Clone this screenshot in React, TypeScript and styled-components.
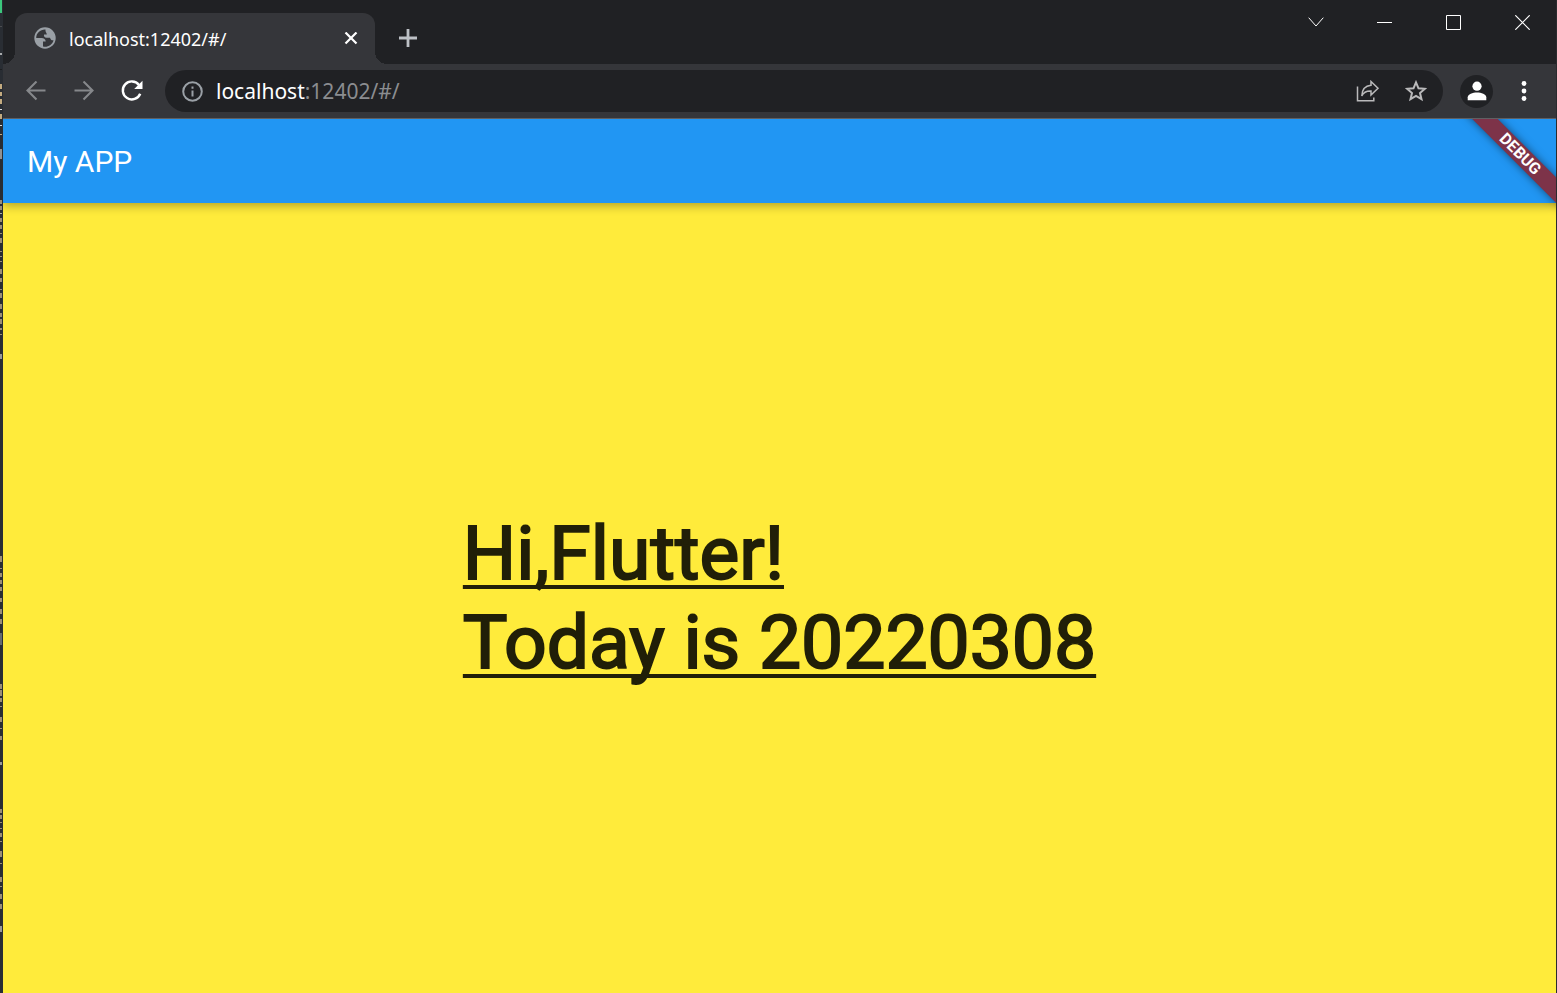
import React from 'react';
import styled, { createGlobalStyle } from 'styled-components';

const Global = createGlobalStyle`
  *, *::before, *::after { box-sizing: border-box; }
  body { margin: 0; background: #202124; }
  button { font: inherit; border: 0; padding: 0; background: none; color: inherit; cursor: pointer; }
`;

const Desktop = styled.div`
  display: flex;
  min-height: 100vh;
  background: #202124;
`;

const Backdrop = styled.div`
  flex: none;
  width: 3px;
  overflow: hidden;
  background: #292d33;
  svg { display: block; }
`;

const BrowserWindow = styled.div`
  flex: 1;
  min-width: 0;
  display: flex;
  flex-direction: column;
  border-right: 1px solid #2a2b2e;
  color: #fff;
  font-family: "Noto Sans", "Open Sans", sans-serif;
`;

const TitleBar = styled.header`
  display: flex;
  align-items: flex-end;
  height: 64px;
  background: #202124;
`;

const Tab = styled.div`
  position: relative;
  display: flex;
  align-items: center;
  width: 360px;
  height: 51px;
  margin-left: 12px;
  padding: 0 14px 0 18px;
  border-radius: 12px 12px 0 0;
  background: #35363a;
  &::before, &::after {
    content: "";
    position: absolute;
    bottom: 0;
    width: 12px;
    height: 12px;
  }
  &::before {
    right: 100%;
    background: radial-gradient(circle at 0 0, transparent 12px, #35363a 12px);
  }
  &::after {
    left: 100%;
    background: radial-gradient(circle at 100% 0, transparent 12px, #35363a 12px);
  }
`;

const TabTitle = styled.span`
  flex: 1;
  margin-left: 12px;
  font-size: 18px;
  line-height: 24px;
`;

const IconButton = styled.button<{ $w: number; $h: number; $color?: string }>`
  display: flex;
  align-items: center;
  justify-content: center;
  flex: none;
  width: ${p => p.$w}px;
  height: ${p => p.$h}px;
  color: ${p => p.$color ?? '#fff'};
  svg { display: block; }
`;

const NewTab = styled.div`
  margin-left: 13px;
  padding-bottom: 6px;
`;

const WindowControls = styled.div`
  display: flex;
  align-self: flex-start;
  margin-left: auto;
`;

const Toolbar = styled.nav`
  display: flex;
  align-items: center;
  height: 55px;
  padding: 0 9px;
  background: #35363a;
  border-bottom: 1px solid #5f6063;
`;

const Omnibox = styled.div`
  flex: 1;
  display: flex;
  align-items: center;
  min-width: 0;
  height: 42px;
  margin: 0 9px;
  padding: 0 3px;
  border-radius: 21px;
  background: #202124;
`;

const Address = styled.div`
  flex: 1;
  font-size: 21px;
  line-height: 28px;
  color: #8b8d90;
  b { font-weight: 400; color: #fff; }
`;

const Avatar = styled.button`
  display: flex;
  align-items: center;
  justify-content: center;
  flex: none;
  width: 33px;
  height: 33px;
  margin: 0 8px;
  border-radius: 50%;
  background: #202124;
`;

const Page = styled.div`
  position: relative;
  flex: 1;
  display: flex;
  flex-direction: column;
  overflow: hidden;
  background: #ffeb3b;
  font-family: Roboto, sans-serif;
`;

const AppBar = styled.header`
  display: flex;
  align-items: center;
  height: 84px;
  padding: 2px 24px 0;
  background: #2196f3;
  box-shadow: 0 3px 9px rgba(0, 0, 0, 0.3);
`;

const AppTitle = styled.h1`
  margin: 0;
  font-size: 30px;
  line-height: 36px;
  font-weight: 400;
`;

const DebugBanner = styled.div`
  position: absolute;
  top: 0;
  right: 0;
  width: 100px;
  height: 100px;
  overflow: hidden;
  span {
    position: absolute;
    top: 26px;
    right: -39px;
    width: 150px;
    height: 18px;
    transform: rotate(45deg);
    background: #7d3349;
    box-shadow: 0 0 9px rgba(0, 0, 0, 0.5);
    font-size: 16px;
    font-weight: 700;
    line-height: 18px;
    text-align: center;
  }
`;

const Body = styled.main`
  flex: 1;
  display: flex;
  align-items: center;
  justify-content: center;
`;

const Greeting = styled.p`
  margin: 0;
  font-size: 75px;
  line-height: 89px;
  color: #211f08;
  -webkit-text-stroke: 2px #211f08;
  text-decoration: underline 4px;
  text-decoration-skip-ink: none;
  text-underline-offset: 6px;
`;

const stroke = { fill: 'none', stroke: 'currentColor' } as const;

/* y, height, colour of the slivers left visible of the editor behind the window */
const slivers: [number, number, string][] = [
  [0, 13, '#3bc77c'], [26, 1, '#4b4d50'], [53, 2, '#a9abad'], [69, 1, '#1d1e20'],
  [84, 5, '#c4ab80'], [92, 4, '#c4ab80'], [99, 5, '#c4ab80'], [109, 1, '#ddd'], [114, 5, '#c4ab80'],
  [125, 1, '#ddd'], [134, 1, '#c4ab80'], [149, 10, '#8f9193'], [200, 4, '#9c8f77'], [206, 4, '#9c8f77'],
  [213, 1, '#aaa'], [218, 4, '#9c8f77'], [225, 4, '#9c8f77'], [233, 1, '#9c8f77'], [238, 5, '#9c8f77'],
  [251, 1, '#9c8f77'], [256, 1, '#9c8f77'], [261, 1, '#9c8f77'], [269, 5, '#9c8f77'], [278, 4, '#9c8f77'],
  [289, 1, '#9c8f77'], [293, 5, '#9c8f77'], [304, 5, '#9c8f77'], [313, 4, '#9c8f77'], [319, 5, '#9c8f77'],
  [328, 2, '#9c8f77'], [334, 1, '#9c8f77'], [354, 5, '#999'], [556, 6, '#9c8f77'], [568, 1, '#9c8f77'],
  [573, 4, '#9c8f77'], [580, 4, '#9c8f77'], [587, 4, '#9c8f77'], [598, 4, '#9c8f77'],
  [609, 5, '#9c8f77'], [619, 5, '#9c8f77'], [633, 12, '#666b70'], [684, 5, '#9c8f77'], [690, 6, '#9c8f77'],
  [698, 4, '#9c8f77'], [706, 1, '#9c8f77'], [717, 5, '#9c8f77'], [728, 1, '#9c8f77'], [736, 4, '#9c8f77'],
  [762, 3, '#999'], [809, 4, '#9c8f77'], [815, 4, '#9c8f77'], [822, 1, '#9c8f77'], [828, 1, '#9c8f77'],
  [833, 4, '#9c8f77'], [841, 1, '#9c8f77'], [851, 6, '#9c8f77'], [863, 1, '#9c8f77'], [877, 5, '#9c8f77'],
  [886, 1, '#9c8f77'], [894, 5, '#9c8f77'], [904, 5, '#9c8f77'], [926, 6, '#999'],
];

export default function App() {
  return (
    <>
      <Global />
      <Desktop>
        <Backdrop aria-hidden="true">
          <svg width="3" height="940">
            {slivers.map(([y, h, c]) => <rect key={y} x="0" y={y} width="2" height={h} fill={c} />)}
          </svg>
        </Backdrop>
        <BrowserWindow>
          <TitleBar>
            <Tab>
              <svg width="24" height="24" viewBox="0 0 24 24" aria-hidden="true">
                <circle cx="12" cy="11" r="10.7" fill="#9aa0a6" />
                <path d="M12.5 2.600C7.500 2.300 3.200 6 3.200 11H8.500C11 11 12.700 12.200 12.700 14.500H10V19.600C14.500 20.800 19.400 17.800 20.500 13.300 18.500 13.500 17.500 12.500 17 10.700H13.500C11.500 10.700 10.600 9.500 11 7.500H13.800C13.800 5.800 12 5 12.500 2.600Z" fill="#35363a" />
              </svg>
              <TabTitle>localhost:12402/#/</TabTitle>
              <IconButton $w={20} $h={20} aria-label="Close tab">
                <svg width="14" height="14" viewBox="0 0 14 14" {...stroke} strokeWidth="2.2"><path d="M1.500 .5l11 11M12.500 .5l-11 11" /></svg>
              </IconButton>
            </Tab>
            <NewTab>
              <IconButton $w={40} $h={40} $color="#bdc1c6" aria-label="New tab">
                <svg width="18" height="18" viewBox="0 0 18 18" {...stroke} strokeWidth="2.8"><path d="M9 0v18M0 9h18" /></svg>
              </IconButton>
            </NewTab>
            <WindowControls>
              <IconButton $w={69} $h={44} aria-label="Search tabs">
                <svg width="16" height="10" viewBox="0 0 16 10" {...stroke}><path d="M.7.7L8 9 15.300.7" /></svg>
              </IconButton>
              <IconButton $w={69} $h={44} aria-label="Minimize">
                <svg width="15" height="1" viewBox="0 0 15 1"><path d="M0 0h15v1H0z" fill="currentColor" /></svg>
              </IconButton>
              <IconButton $w={69} $h={44} aria-label="Maximize">
                <svg width="15" height="15" viewBox="0 0 15 15" {...stroke}><path d="M.5.5h14v14H.5z" /></svg>
              </IconButton>
              <IconButton $w={68} $h={44} aria-label="Close">
                <svg width="15" height="15" viewBox="0 0 15 15" {...stroke} strokeWidth="1.2"><path d="M.3.3l14.400 14.400M14.700.3L.3 14.700" /></svg>
              </IconButton>
            </WindowControls>
          </TitleBar>
          <Toolbar>
            <IconButton $w={48} $h={40} $color="#86888b" aria-label="Back">
              <svg width="20" height="20" viewBox="0 0 20 20" {...stroke} strokeWidth="2.1"><path d="M19.500 9.500H1.500M10.500 .5l-9 9 9 9" /></svg>
            </IconButton>
            <IconButton $w={48} $h={40} $color="#86888b" aria-label="Forward">
              <svg width="20" height="20" viewBox="0 0 20 20" {...stroke} strokeWidth="2.1"><path d="M.5 9.500h18M9.500 .5l9 9-9 9" /></svg>
            </IconButton>
            <IconButton $w={48} $h={40} aria-label="Reload">
              <svg width="22" height="22" viewBox="0 0 22 22"><path d="M18 5A9 9 0 1 0 19.200 13.700" {...stroke} strokeWidth="2.400" /><path d="M21.500 .7v8.300H13.200z" fill="currentColor" /></svg>
            </IconButton>
            <Omnibox>
              <IconButton $w={48} $h={40} $color="#9aa0a6" aria-label="View site information">
                <svg width="21" height="21" viewBox="0 0 21 21" {...stroke} strokeWidth="2"><circle cx="10.5" cy="10.5" r="9.3" /><path d="M10.500 9.500v6M10.500 5.500v2.200" /></svg>
              </IconButton>
              <Address><b>localhost</b>:12402/#/</Address>
              <IconButton $w={48} $h={40} $color="#bababb" aria-label="Share this page">
                <svg width="24" height="22" viewBox="0 0 24 22" {...stroke} strokeWidth="1.5"><path d="M1.500 6.500V20.800H17.800V17.500" /><path d="M15 1.500l7 6.800-7 6.700v-4C10.500 10.800 7.500 12.200 5.800 16 6 9.500 9.500 5.800 15 5.300z" /></svg>
              </IconButton>
              <IconButton $w={48} $h={40} $color="#bababb" aria-label="Bookmark this tab">
                <svg width="22" height="22" viewBox="0 0 22 22" {...stroke} strokeWidth="2"><path d="M11 2.400l2.500 5.900 6.400.5-4.900 4.200 1.500 6.200L11 15.900l-5.500 3.300L7 13 2.100 8.800l6.400-.5z" /></svg>
              </IconButton>
            </Omnibox>
            <Avatar aria-label="Profile">
              <svg width="20" height="20" viewBox="0 0 20 20" fill="#fff"><circle cx="10" cy="5.2" r="4.6" /><path d="M.7 19.300v-3c0-3 5-4.800 9.300-4.800s9.300 1.800 9.300 4.800v3z" /></svg>
            </Avatar>
            <IconButton $w={46} $h={40} aria-label="Menu">
              <svg width="6" height="20" viewBox="0 0 6 20" fill="#fff"><circle cx="3" cy="2.5" r="2.4" /><circle cx="3" cy="10" r="2.4" /><circle cx="3" cy="17.5" r="2.4" /></svg>
            </IconButton>
          </Toolbar>
          <Page>
            <AppBar><AppTitle>My APP</AppTitle></AppBar>
            <Body><Greeting>Hi,Flutter!<br />Today is 20220308</Greeting></Body>
            <DebugBanner><span>DEBUG</span></DebugBanner>
          </Page>
        </BrowserWindow>
      </Desktop>
    </>
  );
}
